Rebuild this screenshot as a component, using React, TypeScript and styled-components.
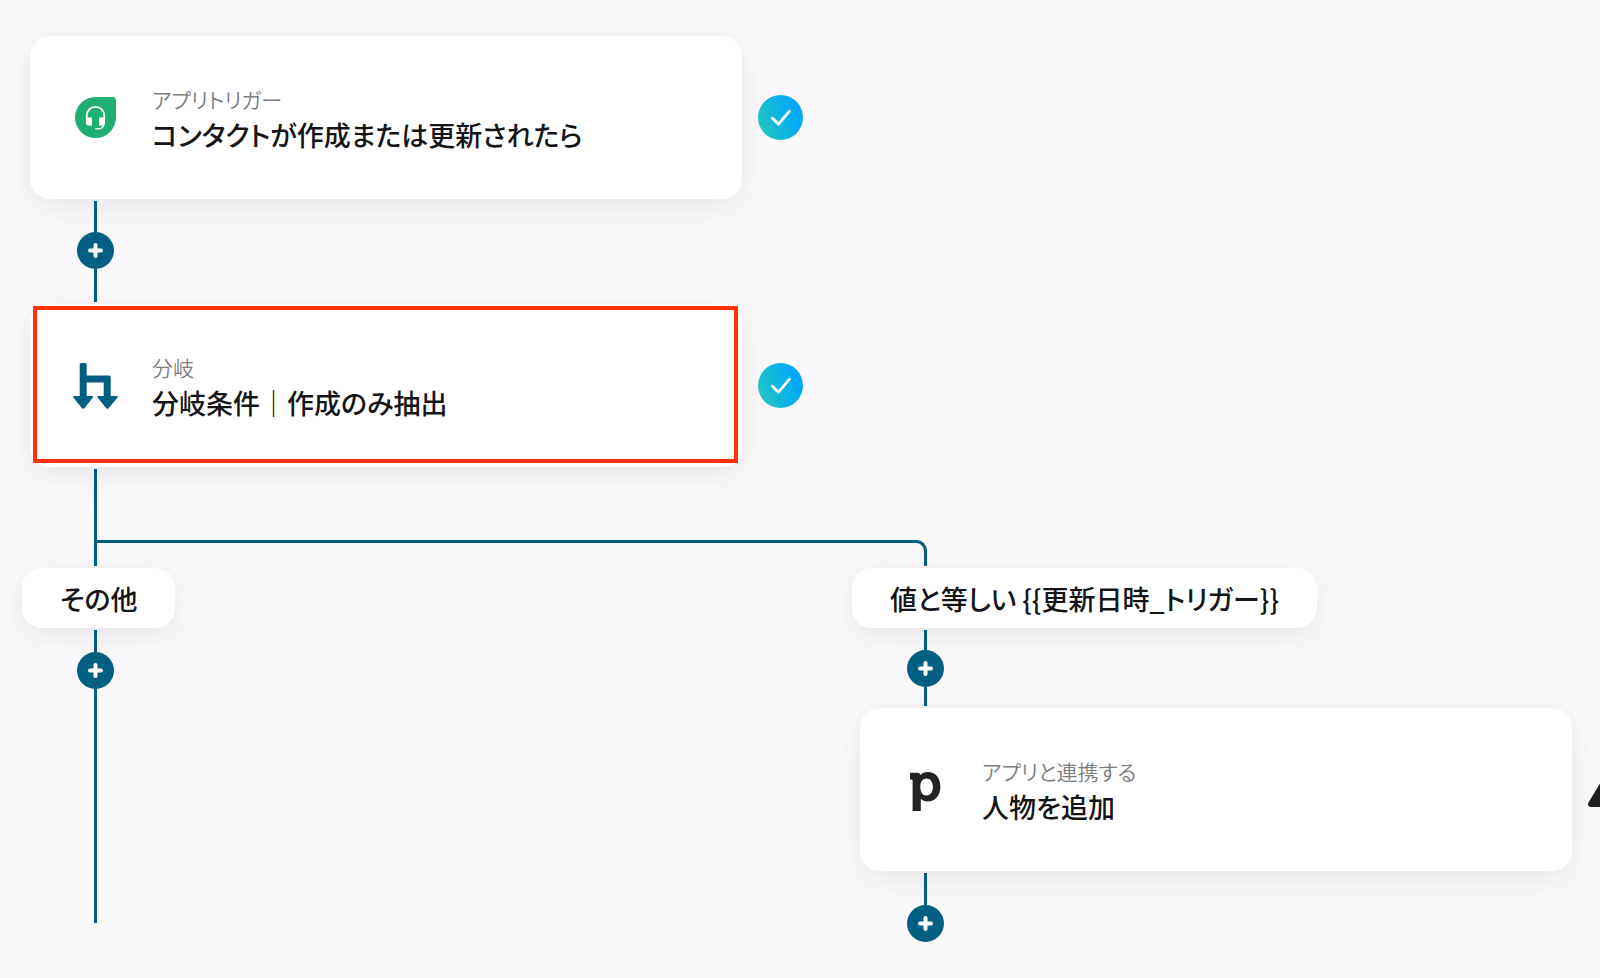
import React from "react";
import styled, { createGlobalStyle } from "styled-components";

const LINE = "#005f83";
const INK = "#151518";

const GlobalStyle = createGlobalStyle`
  *, *::before, *::after { box-sizing: border-box; }
  body {
    margin: 0;
    background: #fbf9fc;
    color: ${INK};
    font-family: "Noto Sans CJK JP", "Noto Sans", sans-serif;
    font-feature-settings: "palt";
  }
`;

const Canvas = styled.main`
  min-height: 100vh;
  padding: 36px 0 32px 22px;
  overflow: hidden;
`;

const Lanes = styled.div`
  display: grid;
  grid-template-columns: 830px 1fr;
  align-items: start;
`;

const Lane = styled.section`
  display: flex;
  flex-direction: column;
  align-items: flex-start;
  min-width: 0;
`;

const StepRow = styled.div`
  display: flex;
  align-items: center;
  gap: 16px;
  margin-left: 8px;
`;

const Card = styled.article<{ $selected?: boolean }>`
  position: relative;
  display: flex;
  flex: none;
  align-items: center;
  gap: 34px;
  width: 712px;
  height: 163px;
  padding: 0 43px;
  border-radius: 20px;
  background: #fff;
  box-shadow: 0 8px 36px rgba(20, 16, 24, 0.09);

  &::after {
    content: ${(p) => (p.$selected ? '""' : "none")};
    position: absolute;
    inset: 2px 4px 4px 3px;
    border: 4px solid #ff3205;
  }
`;

const IconSlot = styled.div`
  display: flex;
  flex: none;
  align-items: center;
  justify-content: center;
  width: 45px;
  height: 46px;
`;

const Label = styled.div`
  padding-bottom: 2px;
`;

const Kind = styled.p`
  margin: 0;
  color: #7c7c80;
  font-size: 21px;
  font-weight: 350;
  line-height: 35px;
`;

const Title = styled.h2`
  margin: 0;
  font-size: 27px;
  font-weight: 500;
  line-height: 35px;
`;

const Condition = styled.h2`
  display: flex;
  align-items: center;
  height: 60px;
  margin: 0;
  padding: 0 38px;
  border-radius: 20px;
  background: #fff;
  box-shadow: 0 8px 36px rgba(20, 16, 24, 0.09);
  font-size: 27px;
  font-weight: 500;
  line-height: 35px;
  white-space: nowrap;
`;

const Connector = styled.div`
  position: relative;
  display: flex;
  flex-direction: column;
  align-items: center;
  width: 37px;
  margin-left: 55px;
  padding: 2px 0;
`;

const Line = styled.div<{ $length: number }>`
  width: 3px;
  height: ${(p) => p.$length}px;
  background: ${LINE};
`;

const AddButton = styled.button`
  display: flex;
  align-items: center;
  justify-content: center;
  width: 37px;
  height: 37px;
  padding: 0;
  border: 0;
  border-radius: 50%;
  background: ${LINE};
  cursor: pointer;
`;

const Fork = styled.div`
  position: relative;
  display: flex;
  align-items: flex-end;
  margin-left: 72px;
  padding: 2px 0;
`;

const ForkArm = styled.div`
  width: 830px;
  height: 26px;
  border: solid ${LINE};
  border-width: 3px 3px 0 0;
  border-radius: 0 11px 0 0;
`;

const Done = styled.span`
  position: relative;
  display: flex;
  flex: none;
  align-items: center;
  justify-content: center;
  width: 45px;
  height: 45px;
  border-radius: 50%;
  background: linear-gradient(70deg, #22c7bb 5%, #00a8fb 80%);
`;

const Warning = styled.span`
  position: relative;
  display: flex;
  flex: none;
  padding-bottom: 8px;
`;

function AddStep() {
  return (
    <AddButton type="button" aria-label="ステップを追加">
      <svg width="15" height="15" viewBox="0 0 15 15" aria-hidden="true">
        <path d="M7.5 2v11M2 7.5h11" stroke="#fff" strokeWidth="4" strokeLinecap="round" />
      </svg>
    </AddButton>
  );
}

function DoneBadge() {
  return (
    <Done role="img" aria-label="設定済み">
      <svg width="22" height="18" viewBox="0 0 22 18" fill="none" aria-hidden="true">
        <path
          d="M2.5 9.2l6 6L19.5 2.2"
          stroke="#fff"
          strokeWidth="2.8"
          strokeLinecap="round"
          strokeLinejoin="round"
        />
      </svg>
    </Done>
  );
}

function WarningBadge() {
  return (
    <Warning role="img" aria-label="未設定">
      <svg width="50" height="42" viewBox="0 0 50 42" aria-hidden="true">
        <path
          d="M3 39L25 3l22 36z"
          fill="#1f1f21"
          stroke="#1f1f21"
          strokeWidth="6"
          strokeLinejoin="round"
        />
        <path d="M25 15v11M25 32v1" stroke="#fff" strokeWidth="4" strokeLinecap="round" />
      </svg>
    </Warning>
  );
}

function HeadsetIcon() {
  return (
    <svg width="41" height="41" viewBox="0 0 41 41" aria-hidden="true">
      <path d="M20.5 0H37.5Q41 0 41 3.5V20.5A20.5 20.5 0 1 1 20.5 0z" fill="#1faf72" />
      <path
        d="M11.8 21v-2.5a8.7 8.7 0 0 1 17.4 0V21"
        fill="none"
        stroke="#fff"
        strokeWidth="1.8"
      />
      <path d="M10.900 20.500h6V28.800h-2.500q-3.500 0-3.500-3.500z" fill="#fff" />
      <path d="M30.100 20.500h-6V28.800h2.500q3.500 0 3.500-3.500z" fill="#fff" />
      <path
        d="M28.800 27q-.4 4.800-4.900 4.800h-3"
        fill="none"
        stroke="#fff"
        strokeWidth="1.4"
        strokeLinecap="round"
      />
    </svg>
  );
}

function BranchIcon() {
  return (
    <svg width="45" height="46" viewBox="0 0 45 46" fill={LINE} aria-hidden="true">
      <path d="M6.700 1.800Q6.700 0 8.500 0h3.400q1.800 0 1.800 1.800v10.700h22.200q1.800 0 1.800 1.800V33h5.800q2.200 0 .7 1.800l-8.300 10.300q-1.400 1.600-2.800 0L24.800 34.800q-1.400-1.800.8-1.800h5.100V19.500h-17V33h5.200q2.200 0 .7 1.800l-8 10.300q-1.400 1.600-2.800 0L.5 34.800Q-.9 33 1.300 33h5.400z" />
    </svg>
  );
}

function PipeIcon() {
  return (
    <svg width="31" height="43" viewBox="0 -4 31 43" fill="#232326" aria-hidden="true">
      <path
        fillRule="evenodd"
        d="M0 .8H7.500Q10 .8 10.300 3C12 1 14.800 0 17.800 0C25.500 0 30.400 6 30.400 14.700C30.400 23.600 25 29.600 17.700 29.600C14.500 29.600 12.200 28.400 10.800 26.800V39H2.600V9Q2.600 7.600 1.200 7.600H0zM16.500 6.600C12.800 6.600 10.300 9.600 10.300 14.900C10.300 19.900 12.700 23.400 16.500 23.400C20 23.400 22.900 20.400 22.900 14.900C22.900 10 20.200 6.600 16.500 6.600z"
      />
    </svg>
  );
}

interface StepProps {
  icon: React.ReactNode;
  kind: string;
  title: string;
  status: React.ReactNode;
  selected?: boolean;
}

function Step({ icon, kind, title, status, selected }: StepProps) {
  return (
    <StepRow>
      <Card $selected={selected}>
        <IconSlot>{icon}</IconSlot>
        <Label>
          <Kind>{kind}</Kind>
          <Title>{title}</Title>
        </Label>
      </Card>
      {status}
    </StepRow>
  );
}

export default function App() {
  return (
    <>
      <GlobalStyle />
      <Canvas>
        <Step
          icon={<HeadsetIcon />}
          kind="アプリトリガー"
          title="コンタクトが作成または更新されたら"
          status={<DoneBadge />}
        />
        <Connector>
          <Line $length={31} />
          <AddStep />
          <Line $length={33} />
        </Connector>
        <Step
          icon={<BranchIcon />}
          kind="分岐"
          title="分岐条件｜作成のみ抽出"
          status={<DoneBadge />}
          selected
        />
        <Fork>
          <Line $length={97} />
          <ForkArm />
        </Fork>
        <Lanes>
          <Lane>
            <Condition>その他</Condition>
            <Connector>
              <Line $length={22} />
              <AddStep />
              <Line $length={234} />
            </Connector>
          </Lane>
          <Lane>
            <Condition>{"値と等しい {{更新日時_トリガー}}"}</Condition>
            <Connector>
              <Line $length={20} />
              <AddStep />
              <Line $length={19} />
            </Connector>
            <Step
              icon={<PipeIcon />}
              kind="アプリと連携する"
              title="人物を追加"
              status={<WarningBadge />}
            />
            <Connector>
              <Line $length={32} />
              <AddStep />
            </Connector>
          </Lane>
        </Lanes>
      </Canvas>
    </>
  );
}
